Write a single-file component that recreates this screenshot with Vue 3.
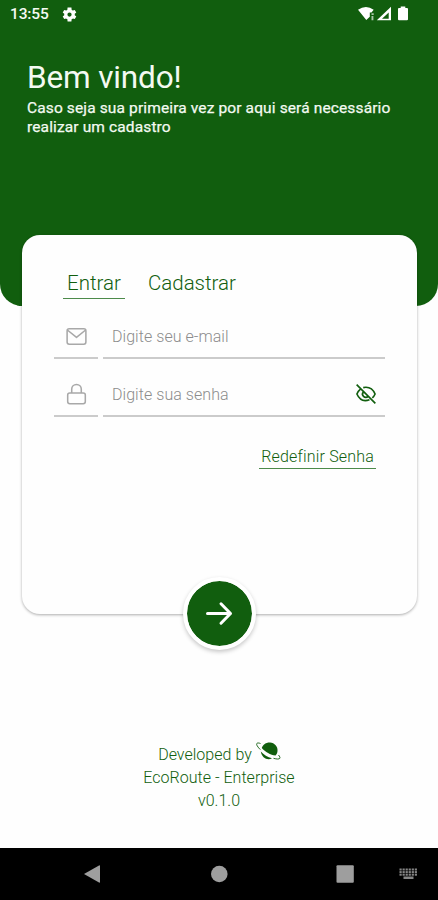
<template>
  <div class="screen">
    <header class="hero">
      <div class="status-bar">
        <span class="clock">13:55</span>
        <svg class="gear" viewBox="0 0 24 24">
          <path
            fill-rule="evenodd"
            d="M19.4 13a7.5 7.5 0 0 0 0-2l2.2-1.7-2.2-3.8-2.6 1a7.5 7.5 0 0 0-1.7-1L14.7 2H9.3l-.4 3.5a7.5 7.5 0 0 0-1.7 1l-2.6-1-2.2 3.8L4.6 11a7.5 7.5 0 0 0 0 2l-2.2 1.7 2.2 3.8 2.6-1a7.5 7.5 0 0 0 1.7 1l.4 3.5h5.4l.4-3.5a7.5 7.5 0 0 0 1.7-1l2.6 1 2.2-3.8zM12 15a3 3 0 1 1 0-6 3 3 0 0 1 0 6z"
          />
        </svg>
        <svg class="signals" viewBox="0 0 52 16">
          <path d="M1 3.8Q9-2 16.7 3.8L14.5 6.5h-1.7v4.2L9.3 14z" />
          <path d="M14.5 7.3h2.2V9h-2.2zM14.5 10h1.9v4.2h-1.9z" opacity=".65" />
          <path fill-rule="evenodd" d="M34 .8v13.5H19.8zM31.7 6.5L25 12.7h6.7z" />
          <path d="M43.7.6h4.6v1.500h1.700q1 0 1 1v10.200q0 1-1 1h-8q-1 0-1-1V3.100q0-1 1-1h1.700z" />
        </svg>
      </div>
      <h1>Bem vindo!</h1>
      <p>Caso seja sua primeira vez por aqui será necessário<br />realizar um cadastro</p>
    </header>

    <main class="card">
      <nav class="tabs">
        <a
          v-for="tab in tabs"
          :key="tab"
          class="tab"
          :class="{ active: tab === current }"
          @click="current = tab"
        >{{ tab }}</a>
      </nav>

      <div class="field">
        <span class="field-icon">
          <svg viewBox="0 0 24 24">
            <rect x="2.2" y="4" width="19.6" height="16" rx="2.2" />
            <path d="M2.8 5.5L12 13l9.2-7.5" />
          </svg>
        </span>
        <div class="field-input">
          <input v-model="email" type="email" placeholder="Digite seu e-mail" />
        </div>
      </div>

      <div class="field">
        <span class="field-icon">
          <svg viewBox="0 0 24 24">
            <rect x="2.8" y="10.4" width="18.4" height="11.2" rx="2.2" />
            <path d="M7 10.4V6.5a5 5 0 0 1 10 0v3.9" />
          </svg>
        </span>
        <div class="field-input">
          <input
            v-model="password"
            :type="visible ? 'text' : 'password'"
            placeholder="Digite sua senha"
          />
          <svg class="eye" viewBox="0 0 24 24" @click="visible = !visible">
            <path d="M1.8 1.8l20.4 20.4M9 5a10.5 10.5 0 0 1 3-.4c4.300 0 7.800 2.400 9.900 7.400a11 11 0 0 1-3 4.200M15.800 18.300C10 20.300 4.800 18.300 2.100 12a11 11 0 0 1 3.600-5" />
            <path d="M9.3 9.6a3.4 3.4 0 0 0 5 5" />
          </svg>
        </div>
      </div>

      <a class="reset">Redefinir Senha</a>
    </main>

    <button class="submit" aria-label="Entrar">
      <svg viewBox="0 0 28 28">
        <path d="M2.5 14.500h23M16 4.800l9.500 9.700-9.500 9.700" />
      </svg>
    </button>

    <footer class="credits">
      <div class="developed">
        <span>Developed by</span>
        <svg class="planet" viewBox="0 0 26 20">
          <path d="M5.8 6C7 2.3 10.5.2 14 .5c4.600.4 8 4 7.500 8.500-.1 1.700-.8 3.300-2 4.600C14.500 13 9.300 10 5.800 6z" />
          <path d="M4.8 9.500c3 3.400 6.800 5.700 11.200 6.800-4.500 2.300-10.200-.2-11.200-6.800z" />
          <path class="ring" d="M4.500 1.500C1 .2-.3 1.500 1.300 4c.8 1.300 1.900 2.600 3 3.600" />
          <path class="ring" d="M17.500 16.300c5.400 1.500 8.500.8 5-3.300" />
        </svg>
      </div>
      <div class="company">EcoRoute - Enterprise</div>
      <div class="version">v0.1.0</div>
    </footer>

    <div class="android-nav">
      <svg viewBox="0 0 438 52">
        <path d="M84 26L99 17.500q1-.5 1 .6V34q0 1-1 .5z" />
        <circle cx="219.3" cy="26" r="8.3" />
        <rect x="336.5" y="17.300" width="17.3" height="17.5" rx="1" />
        <g class="keyboard">
          <rect
            v-for="key in keys"
            :key="key.id"
            :x="key.x"
            :y="key.y"
            width="2.2"
            height="2"
          />
          <rect x="403.5" y="28.5" width="10" height="2.5" />
        </g>
      </svg>
    </div>
  </div>
</template>

<script setup>
import { ref } from 'vue'

const tabs = ['Entrar', 'Cadastrar']
const current = ref('Entrar')
const email = ref('')
const password = ref('')
const visible = ref(false)

const keys = Array.from({ length: 18 }, (_, i) => ({
  id: i,
  x: 399.5 + (i % 6) * 3.05,
  y: 20.5 + Math.floor(i / 6) * 2.6,
}))
</script>

<style>
body { margin: 0; background: #fff; }
</style>

<style scoped>
.screen { width: 438px; height: 900px; display: flex; flex-direction: column; overflow: hidden; background: #fefefe; font-family: Roboto, "Liberation Sans", sans-serif; color: #115e0e; }
.hero { box-sizing: border-box; flex: none; height: 306px; background: #115e0e; border-radius: 0 0 22px 22px; color: #f4faf2; }

.status-bar { display: flex; align-items: center; height: 28px; padding: 0 29px 0 10px; }
.clock { font-size: 15.5px; font-weight: 500; line-height: 30px; letter-spacing: -0.15px; }
.gear { width: 17px; height: 17px; margin-left: 12px; fill: #fff; }
.signals { width: 52px; height: 16px; margin-left: auto; fill: #fff; }

h1 { margin: 31px 0 0 27px; font-size: 31.5px; font-weight: 400; line-height: 38px; letter-spacing: -0.15px; }
p { margin: 2px 0 0 27px; font-size: 15.5px; font-weight: 400; line-height: 19px; letter-spacing: 0.13px; -webkit-text-stroke: 0.25px #f4faf2; white-space: nowrap; }

.card { box-sizing: border-box; flex: none; width: 395px; height: 379px; margin: -71.5px 0 0 22px; padding: 33.5px 32px 0; display: flex; flex-direction: column; background: #fefefe; border-radius: 18px; box-shadow: 0 1px 3px rgba(0, 0, 0, 0.32); }
.tabs { display: flex; gap: 19px; padding-left: 9px; }
.tab { padding: 0 4px; height: 30px; border-bottom: 1.5px solid transparent; font-size: 20.5px; font-weight: 300; line-height: 30px; }
.tab.active { border-bottom-color: #4c8a4a; }

.field { display: flex; gap: 5px; height: 58px; }
.tabs + .field { margin-top: 2px; }
.field-icon, .field-input { box-sizing: border-box; display: flex; align-items: center; border-bottom: 2px solid #cbcbcb; }
.field-icon { width: 44px; justify-content: center; padding-top: 14px; }
.field-icon svg { width: 23px; height: 23px; fill: none; stroke: #a8a8a8; stroke-width: 1.6; stroke-linejoin: round; }
.field-input { flex: 1; min-width: 0; padding: 14px 8px 0 9px; }
input { flex: 1; min-width: 0; padding: 0; border: 0; outline: 0; background: none; font-family: inherit; font-size: 16px; font-weight: 300; letter-spacing: 0.05px; color: #115e0e; }
input::placeholder { color: #8c8c8c; opacity: 1; }
.eye { width: 22px; height: 22px; fill: none; stroke: #115e0e; stroke-width: 1.8; }

.reset { align-self: flex-end; margin: 28px 9px 0 0; padding: 0 2px; height: 23px; border-bottom: 1.5px solid #4c8a4a; font-size: 16px; font-weight: 300; line-height: 23px; letter-spacing: 0.18px; }

.submit { box-sizing: content-box; flex: none; align-self: center; display: flex; align-items: center; justify-content: center; width: 65px; height: 65px; margin-top: -37px; padding: 0; border: 4px solid #fff; border-radius: 50%; background: #115e0e; background-clip: padding-box; box-shadow: 0 2px 4px rgba(0, 0, 0, 0.22); }
.submit svg { width: 28px; height: 28px; fill: none; stroke: #fff; stroke-width: 3; stroke-linecap: round; stroke-linejoin: round; }

.credits { flex: 1; display: flex; flex-direction: column; align-items: center; padding-top: 93px; font-size: 16px; font-weight: 300; line-height: 23px; letter-spacing: 0.02px; }
.developed { display: flex; gap: 4px; height: 23px; padding-left: 2px; }
.planet { width: 26px; height: 20px; margin-top: -1px; fill: #115e0e; }
.planet .ring { fill: none; stroke: #115e0e; stroke-width: 0.9; }

.android-nav { flex: none; height: 52px; background: #000; }
.android-nav svg { display: block; width: 438px; height: 52px; fill: #9e9e9e; }
.keyboard { fill: #858585; }
</style>
